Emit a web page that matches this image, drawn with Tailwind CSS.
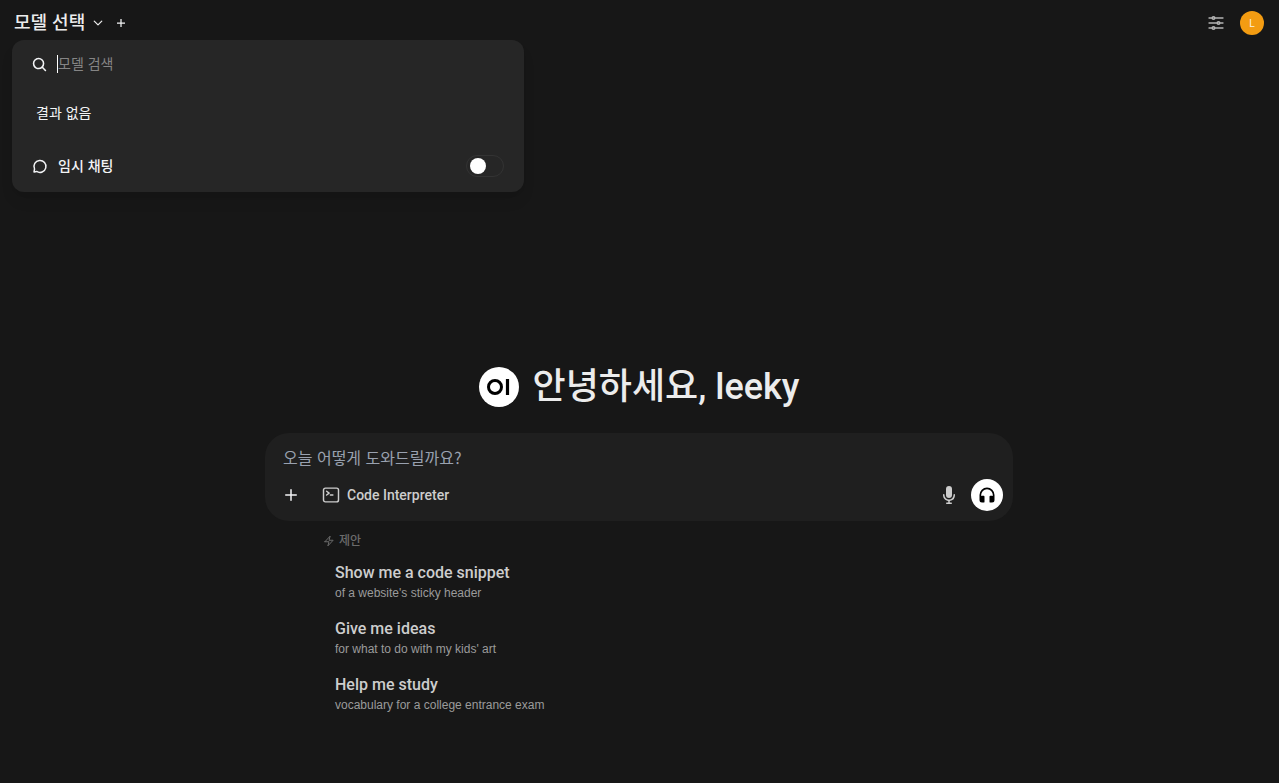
<!DOCTYPE html>
<html lang="ko">
<head>
  <meta charset="UTF-8">
  <meta name="viewport" content="width=device-width, initial-scale=1.0">
  <title>Open WebUI</title>
  <script src="https://cdn.jsdelivr.net/npm/@tailwindcss/browser@4"></script>
</head>
<body class="min-h-screen flex flex-col bg-[#171717] text-gray-100 font-['Liberation_Sans','Noto_Sans_CJK_KR',sans-serif]">

  <!-- top bar -->
  <header class="relative z-10 flex h-[46px] items-center justify-between pl-3.5 pr-[15px]">
    <div class="flex items-center">
      <button type="button" class="flex items-center gap-[7px] text-lg font-medium text-[#ececec]">
        모델 선택
        <svg class="size-3" viewBox="0 0 24 24" fill="none" stroke="currentColor" stroke-width="2.5" stroke-linecap="round" stroke-linejoin="round"><path d="m19.5 8.25-7.5 7.5-7.5-7.5"/></svg>
      </button>
      <button type="button" aria-label="모델 추가" class="ml-[9px] p-0.5">
        <svg class="size-3" viewBox="0 0 24 24" fill="none" stroke="currentColor" stroke-width="2.5"><path d="M12 4v16M4 12h16"/></svg>
      </button>
    </div>

    <div class="flex items-center gap-3.5">
      <button type="button" aria-label="제어" class="text-[#b4b4b4]">
        <svg class="size-5" viewBox="0 0 24 24" fill="none" stroke="currentColor" stroke-width="2" stroke-linecap="round" stroke-linejoin="round"><path d="M10.5 6h9.75M10.5 6a1.5 1.5 0 1 1-3 0m3 0a1.5 1.5 0 1 0-3 0M3.75 6H7.5m3 12h9.75m-9.75 0a1.5 1.5 0 0 1-3 0m3 0a1.5 1.5 0 0 0-3 0m-3.75 0H7.5m9-6h3.75m-3.75 0a1.5 1.5 0 0 1-3 0m3 0a1.5 1.5 0 0 0-3 0m-9.75 0h9.75"/></svg>
      </button>
      <button type="button" aria-label="사용자 메뉴" class="size-6 rounded-full bg-[#f39c12] text-[10px] text-[#fdf0dc]">L</button>
    </div>

    <!-- model menu -->
    <div class="absolute left-3 top-10 w-lg rounded-xl bg-[#262626] shadow-lg">
      <div class="flex h-12 items-center gap-2.5 px-5">
        <svg class="size-[15px]" viewBox="0 0 24 24" fill="none" stroke="currentColor" stroke-width="2.5" stroke-linecap="round"><circle cx="10.5" cy="10.5" r="8"/><path d="m16.500 16.500 5 5"/></svg>
        <input type="text" aria-label="모델 검색" placeholder="모델 검색" class="h-[18px] flex-1 border-l border-white bg-transparent text-sm outline-none placeholder:text-[#858585]">
      </div>
      <p class="px-6 pb-[17px] pt-[15px] text-sm">결과 없음</p>
      <div class="flex h-[52px] items-center justify-between px-5">
        <label for="temporary" class="flex items-center gap-2.5 text-sm font-medium">
          <svg class="size-4" viewBox="0 0 24 24" fill="none" stroke="currentColor" stroke-width="2.2" stroke-linecap="round" stroke-linejoin="round"><path d="M7 20.2A9 9 0 1 0 3.8 16.500L3 21l4-.8Z"/></svg>
          임시 채팅
        </label>
        <input type="checkbox" role="switch" id="temporary" class="h-[22px] w-[38px] appearance-none rounded-full border border-[#333333] px-[3px] before:mt-0.5 before:block before:size-4 before:rounded-full before:bg-white before:content-['']">
      </div>
    </div>
  </header>

  <main class="flex flex-1 flex-col items-center pl-4 pr-[17px] pt-80">
    <h1 class="flex h-[42px] items-center gap-3.5 text-4xl font-medium text-[#ececec]">
      <svg class="size-10" viewBox="0 0 40 40" fill="none"><circle cx="20" cy="20" r="20" fill="#fff"/><circle cx="16" cy="20" r="6.500" stroke="#000" stroke-width="3"/><path d="M28.500 12v16" stroke="#000" stroke-width="3.200"/></svg>
      <span>안녕하세요<span class="font-['Roboto']">, leeky</span></span>
    </h1>

    <!-- message box -->
    <form class="mt-[25px] w-full max-w-[748px] rounded-3xl bg-[#1f1f1f] px-2.5 pb-2.5 pt-3">
      <textarea rows="1" aria-label="메시지" placeholder="오늘 어떻게 도와드릴까요?" class="block h-[26px] w-full resize-none bg-transparent px-2 font-['Noto_Sans_CJK_KR'] text-base leading-6 outline-none placeholder:text-[#99a1af]"></textarea>
      <div class="mt-2 flex items-center justify-between">
        <div class="flex items-center gap-3.5">
          <button type="button" aria-label="더 보기" class="p-1.5">
            <svg class="size-5" viewBox="0 0 20 20" fill="currentColor"><path d="M10.750 4.750a.75.75 0 0 0-1.500 0v4.500h-4.500a.75.75 0 0 0 0 1.500h4.500v4.500a.75.75 0 0 0 1.500 0v-4.500h4.500a.75.75 0 0 0 0-1.500h-4.500v-4.500Z"/></svg>
          </button>
          <button type="button" class="flex items-center gap-1.5 font-['Roboto'] text-sm font-medium text-[#cdcdcd]">
            <svg class="size-5" viewBox="0 0 24 24" fill="none" stroke="currentColor" stroke-width="1.75" stroke-linecap="round" stroke-linejoin="round"><path d="m6.750 7.500 3 2.250-3 2.250m4.500 0h3m-9 8.250h13.500A2.250 2.250 0 0 0 21 18V6a2.250 2.250 0 0 0-2.250-2.250H5.250A2.250 2.250 0 0 0 3 6v12a2.250 2.250 0 0 0 2.250 2.250Z"/></svg>
            Code Interpreter
          </button>
        </div>
        <div class="flex items-center gap-3">
          <button type="button" aria-label="음성 입력" class="text-[#cdcdcd]">
            <svg class="size-5" viewBox="0 0 20 20" fill="currentColor"><path d="M7 4a3 3 0 0 1 6 0v6a3 3 0 1 1-6 0V4Z"/><path d="M5.500 9.643a.75.75 0 0 0-1.500 0V10c0 3.060 2.290 5.585 5.250 5.954V17.500h-1.500a.75.75 0 0 0 0 1.500h4.500a.75.75 0 0 0 0-1.500h-1.500v-1.546A6.001 6.001 0 0 0 16 10v-.357a.75.75 0 0 0-1.500 0V10a4.500 4.500 0 0 1-9 0v-.357Z"/></svg>
          </button>
          <button type="button" aria-label="통화" class="rounded-full bg-white p-1.5 text-black">
            <svg class="size-5" viewBox="0 0 24 24" fill="currentColor"><path fill-rule="evenodd" clip-rule="evenodd" d="M12 5a7 7 0 0 0-7 7v1.170c.313-.11.650-.17 1-.17h2a1 1 0 0 1 1 1v6a1 1 0 0 1-1 1H6a3 3 0 0 1-3-3v-6a9 9 0 0 1 18 0v6a3 3 0 0 1-3 3h-2a1 1 0 0 1-1-1v-6a1 1 0 0 1 1-1h2c.350 0 .687.060 1 .17V12a7 7 0 0 0-7-7Z"/></svg>
          </button>
        </div>
      </div>
    </form>

    <!-- suggestions -->
    <section class="mt-3 w-full max-w-2xl px-5">
      <h2 class="mb-1 flex items-center gap-1 text-xs font-medium leading-4 text-[#6b6b6b]">
        <svg class="size-3" viewBox="0 0 24 24" fill="none" stroke="currentColor" stroke-width="2" stroke-linecap="round" stroke-linejoin="round"><path d="m3.750 13.500 10.500-11.250L12 10.500h8.250L9.750 21.750 12 13.500H3.750Z"/></svg>
        제안
      </h2>
      <div class="flex flex-col">
        <button type="button" class="px-3 py-2 text-left">
          <span class="block font-['Roboto'] text-base font-medium text-[#cdcdcd]">Show me a code snippet</span>
          <span class="block text-xs text-[#9b9b9b]">of a website's sticky header</span>
        </button>
        <button type="button" class="px-3 py-2 text-left">
          <span class="block font-['Roboto'] text-base font-medium text-[#cdcdcd]">Give me ideas</span>
          <span class="block text-xs text-[#9b9b9b]">for what to do with my kids' art</span>
        </button>
        <button type="button" class="px-3 py-2 text-left">
          <span class="block font-['Roboto'] text-base font-medium text-[#cdcdcd]">Help me study</span>
          <span class="block text-xs text-[#9b9b9b]">vocabulary for a college entrance exam</span>
        </button>
      </div>
    </section>
  </main>
</body>
</html>
